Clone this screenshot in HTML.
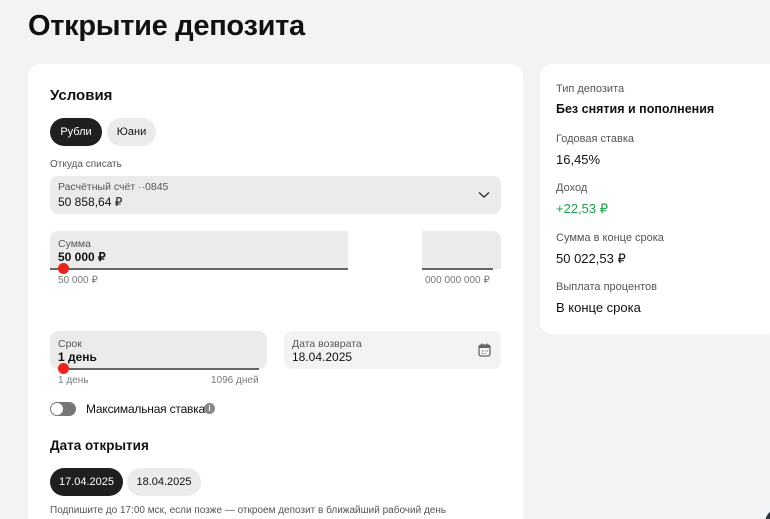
<!DOCTYPE html>
<html><head><meta charset="utf-8"><style>
*{box-sizing:border-box;margin:0;padding:0}
html,body{width:770px;height:519px;overflow:hidden}
body{background:#f2f3f5;font-family:"Liberation Sans","Noto Sans CJK SC",sans-serif;color:#111;position:relative}
.a{position:absolute}
h1{position:absolute;left:28px;top:10px;font-size:29px;font-weight:700;letter-spacing:-0.3px}
.card{position:absolute;background:#fff;border-radius:12px}
.lbl{font-size:11px;color:#555}
.pill{position:absolute;height:28px;border-radius:14px;font-size:11px;line-height:28px;text-align:center}
.field{position:absolute;background:#ebebec;border-radius:8px}
.rl{font-size:13px;color:#111;font-weight:400}
</style></head><body>
<h1>Открытие депозита</h1>
<div class="card" style="left:28px;top:64px;width:495px;height:470px"></div>
<div class="card" style="left:540px;top:64px;width:240px;height:270px"></div>
<div class="a" style="left:50px;top:87px;font-size:15px;font-weight:700">Условия</div>
<div class="pill" style="left:50px;top:118px;width:52px;background:#1f1f1f;color:#fff">Рубли</div>
<div class="pill" style="left:107px;top:118px;width:49px;background:#ebebec;color:#111">Юани</div>
<div class="a lbl" style="left:50px;top:159px;font-size:10px">Откуда списать</div>
<div class="field" style="left:50px;top:176px;width:451px;height:38px"></div>
<div class="a lbl" style="left:58px;top:181px;font-size:10.5px">Расчётный счёт ··0845</div>
<div class="a" style="left:58px;top:195px;font-size:12px">50 858,64 ₽</div>
<svg class="a" style="left:478px;top:191px" width="12" height="8"><path d="M1 1.5 6 6 11 1.5" fill="none" stroke="#333" stroke-width="1.4"/></svg>
<div class="field" style="left:50px;top:231px;width:451px;height:38px;border-radius:8px 8px 0 0"></div>
<div class="a" style="left:348px;top:231px;width:74px;height:40px;background:#fff"></div>
<div class="a" style="left:50px;top:268px;width:298px;height:2px;background:#666"></div>
<div class="a" style="left:422px;top:268px;width:71px;height:2px;background:#666"></div>
<div class="a lbl" style="left:58px;top:238px;font-size:10.5px">Сумма</div>
<div class="a" style="left:58px;top:250px;font-size:12px;font-weight:700">50 000 ₽</div>
<div class="a" style="left:58px;top:263px;width:11px;height:11px;border-radius:50%;background:#e8231e"></div>
<div class="a lbl" style="left:58px;top:275px;font-size:10px;color:#777">50 000 ₽</div>
<div class="a lbl" style="left:425px;top:275px;font-size:10px;color:#777">000 000 000 ₽</div>
<div class="field" style="left:50px;top:331px;width:217px;height:38px"></div>
<div class="a" style="left:58px;top:368px;width:201px;height:2px;background:#666"></div>
<div class="a lbl" style="left:58px;top:338px;font-size:10.5px">Срок</div>
<div class="a" style="left:58px;top:350px;font-size:12px;font-weight:700">1 день</div>
<div class="a" style="left:58px;top:363px;width:11px;height:11px;border-radius:50%;background:#e8231e"></div>
<div class="a lbl" style="left:58px;top:375px;font-size:10px;color:#777">1 день</div>
<div class="a lbl" style="left:211px;top:375px;font-size:10px;color:#777">1096 дней</div>
<div class="field" style="left:284px;top:331px;width:217px;height:38px;background:#f2f3f5"></div>
<div class="a lbl" style="left:292px;top:338px;font-size:10.5px">Дата возврата</div>
<div class="a" style="left:292px;top:350px;font-size:12px">18.04.2025</div>
<svg class="a" style="left:478px;top:343px" width="13" height="14"><rect x="1" y="2" width="11" height="11" rx="2" fill="none" stroke="#666" stroke-width="1.3"/><rect x="1" y="2" width="11" height="3" fill="#666"/><path d="M4 0.5v3M9 0.5v3" stroke="#666" stroke-width="1.2"/><path d="M4 8h1M6.5 8h1M9 8h1M4 10.5h1M6.5 10.5h1" stroke="#666"/></svg>
<div class="a" style="left:50px;top:402px;width:26px;height:14px;border-radius:7px;background:#777"></div>
<div class="a" style="left:51px;top:403px;width:12px;height:12px;border-radius:50%;background:#fff"></div>
<div class="a" style="left:86px;top:402px;font-size:12px;letter-spacing:-0.2px">Максимальная ставка</div>
<div class="a" style="left:204px;top:403px;width:11px;height:11px;border-radius:50%;background:#888;color:#fff;font-size:8px;text-align:center;line-height:11px;font-weight:700">i</div>
<div class="a" style="left:50px;top:438px;font-size:13.5px;font-weight:700">Дата открытия</div>
<div class="pill" style="left:50px;top:468px;width:73px;background:#1f1f1f;color:#fff">17.04.2025</div>
<div class="pill" style="left:127px;top:468px;width:74px;background:#ebebec">18.04.2025</div>
<div class="a lbl" style="left:50px;top:505px;font-size:10px">Подпишите до 17:00 мск, если позже — откроем депозит в ближайший рабочий день</div>
<div class="a lbl" style="left:556px;top:83px">Тип депозита</div>
<div class="a rl" style="left:556px;top:102px;font-weight:700;font-size:12.5px">Без снятия и пополнения</div>
<div class="a lbl" style="left:556px;top:133px">Годовая ставка</div>
<div class="a rl" style="left:556px;top:152px">16,45%</div>
<div class="a lbl" style="left:556px;top:182px">Доход</div>
<div class="a rl" style="left:556px;top:201px;color:#1b9e4b">+22,53 ₽</div>
<div class="a lbl" style="left:556px;top:232px">Сумма в конце срока</div>
<div class="a rl" style="left:556px;top:251px">50 022,53 ₽</div>
<div class="a lbl" style="left:556px;top:281px">Выплата процентов</div>
<div class="a rl" style="left:556px;top:300px">В конце срока</div>
<div class="a" style="left:765px;top:508px;width:30px;height:30px;border-radius:50%;background:#2d3440"></div>
</body></html>
